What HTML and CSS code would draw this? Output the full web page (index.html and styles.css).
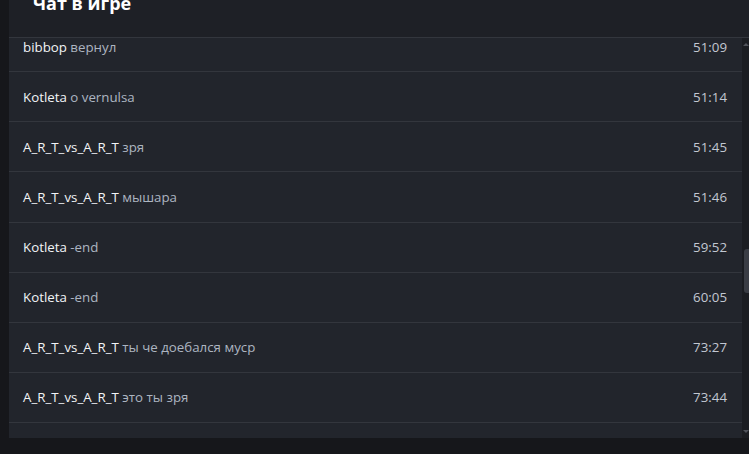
FILE: index.html
```html
<!DOCTYPE html>
<html lang="ru">
<head>
    <meta charset="UTF-8">
    <meta name="viewport" content="width=device-width, initial-scale=1.0">
    <title>Чат в игре</title>
    <link rel="stylesheet" href="styles.css">
</head>
<body>
<div class="chat-panel">
    <div class="chat-header">
        <h2>Чат в игре</h2>
    </div>
    <div class="chat-body">
        <div class="chat-messages">
            <div class="chat-list">
                <div class="message">
                    <div class="message-text"><span class="author">bibbop</span> вернул</div>
                    <div class="time">51:09</div>
                </div>
                <div class="message">
                    <div class="message-text"><span class="author">Kotleta</span> o vernulsa</div>
                    <div class="time">51:14</div>
                </div>
                <div class="message">
                    <div class="message-text"><span class="author">A_R_T_vs_A_R_T</span> зря</div>
                    <div class="time">51:45</div>
                </div>
                <div class="message">
                    <div class="message-text"><span class="author">A_R_T_vs_A_R_T</span> мышара</div>
                    <div class="time">51:46</div>
                </div>
                <div class="message">
                    <div class="message-text"><span class="author">Kotleta</span> -end</div>
                    <div class="time">59:52</div>
                </div>
                <div class="message">
                    <div class="message-text"><span class="author">Kotleta</span> -end</div>
                    <div class="time">60:05</div>
                </div>
                <div class="message">
                    <div class="message-text"><span class="author">A_R_T_vs_A_R_T</span> ты че доебался муср</div>
                    <div class="time">73:27</div>
                </div>
                <div class="message">
                    <div class="message-text"><span class="author">A_R_T_vs_A_R_T</span> это ты зря</div>
                    <div class="time">73:44</div>
                </div>
            </div>
        </div>
        <div class="scrollbar">
            <div class="scroll-arrow up"></div>
            <div class="scroll-track">
                <div class="scroll-thumb" style="margin-top: 198px;"></div>
            </div>
            <div class="scroll-arrow down"></div>
        </div>
    </div>
</div>
</body>
</html>
```

FILE: styles.css
```css
body {
    margin: 0;
    background-color: #16171b;
    font-family: "Open Sans", "Noto Sans", Arial, sans-serif;
    font-size: 13.3px;
}

.chat-panel {
    margin-left: 9px;
    height: 438px;
    background-color: #22252c;
    display: flex;
    flex-direction: column;
    overflow: hidden;
}

.chat-header {
    height: 37px;
    flex-shrink: 0;
    background-color: #1e2026;
    border-bottom: 1px solid #33363d;
    padding-left: 24px;
    overflow: hidden;
}

.chat-header h2 {
    margin: -9px 0 0;
    font-size: 18px;
    line-height: 24px;
    font-weight: 700;
    color: #fff;
}

.chat-body {
    flex: 1;
    display: flex;
    min-height: 0;
}

.chat-messages {
    flex: 1;
    overflow: hidden;
}

/* list is scrolled a bit down */
.chat-list {
    margin-top: -16px;
}

.message {
    box-sizing: border-box;
    height: 50.14px;
    display: flex;
    align-items: center;
    justify-content: space-between;
    padding: 0 15px 0 14px;
    border-bottom: 1px solid #33363d;
}

.message-text {
    color: #adb5c1;
}

.author {
    color: #f2f4f7;
}

.time {
    color: #c2c8d2;
}

.scrollbar {
    width: 7px;
    background-color: #1b1d22;
    display: flex;
    flex-direction: column;
    align-items: flex-end;
}

.scroll-track {
    flex: 1;
    width: 5px;
}

.scroll-thumb {
    height: 44px;
    background-color: #3a3d45;
    border-radius: 3px 0 0 3px;
}

.scroll-arrow {
    width: 0;
    height: 0;
    border-left: 3px solid transparent;
    border-right: 3px solid transparent;
    margin: 5px 0;
}

.scroll-arrow.up {
    border-bottom: 3px solid #50535b;
}

.scroll-arrow.down {
    border-top: 3px solid #50535b;
}
```
